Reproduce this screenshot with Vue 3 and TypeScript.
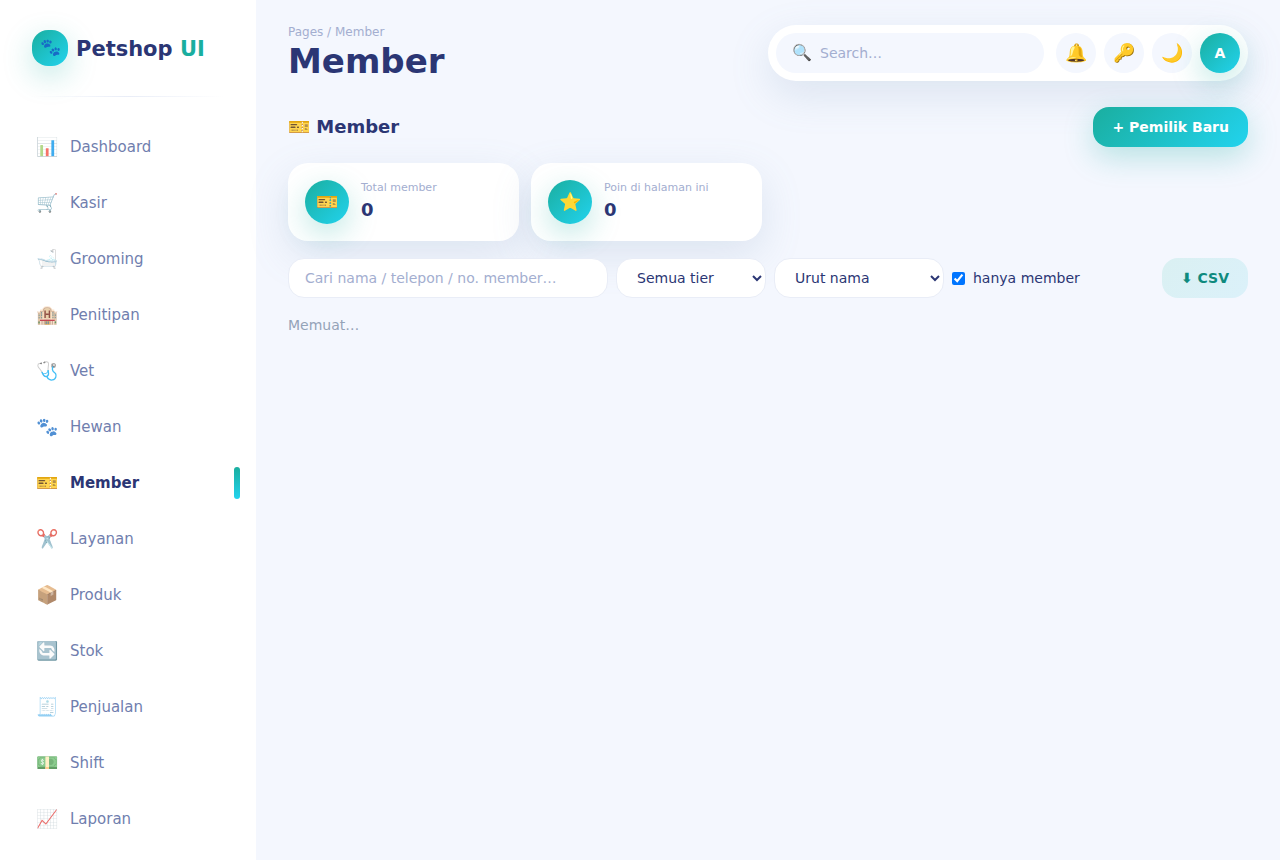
<script setup lang="ts">
import { ref } from 'vue'

interface NavItem {
  icon: string
  label: string
}

interface Stat {
  icon: string
  label: string
  value: number
}

const navItems: NavItem[] = [
  { icon: '📊', label: 'Dashboard' },
  { icon: '🛒', label: 'Kasir' },
  { icon: '🛁', label: 'Grooming' },
  { icon: '🏨', label: 'Penitipan' },
  { icon: '🩺', label: 'Vet' },
  { icon: '🐾', label: 'Hewan' },
  { icon: '🎫', label: 'Member' },
  { icon: '✂️', label: 'Layanan' },
  { icon: '📦', label: 'Produk' },
  { icon: '🔄', label: 'Stok' },
  { icon: '🧾', label: 'Penjualan' },
  { icon: '💵', label: 'Shift' },
  { icon: '📈', label: 'Laporan' },
]

const stats: Stat[] = [
  { icon: '🎫', label: 'Total member', value: 0 },
  { icon: '⭐', label: 'Poin di halaman ini', value: 0 },
]

const active = ref('Member')
const search = ref('')
const query = ref('')
const tier = ref('all')
const sort = ref('name')
const membersOnly = ref(true)
</script>

<template>
  <div class="layout">
    <aside class="sidebar">
      <div class="brand">
        <span class="brand-mark">🐾</span>
        <span class="brand-name">Petshop <span class="accent">UI</span></span>
      </div>
      <div class="divider"></div>
      <nav class="nav">
        <a
          v-for="item in navItems"
          :key="item.label"
          href="#"
          class="nav-item"
          :class="{ active: item.label === active }"
          @click.prevent="active = item.label"
        >
          <span class="nav-icon">{{ item.icon }}</span>
          <span>{{ item.label }}</span>
        </a>
      </nav>
    </aside>

    <main class="main">
      <header class="topbar">
        <div>
          <div class="crumb">Pages / Member</div>
          <h1 class="title">Member</h1>
        </div>
        <div class="tools">
          <label class="search">
            <span class="search-icon">🔍</span>
            <input v-model="search" type="text" placeholder="Search…" aria-label="Search" />
          </label>
          <button class="round" type="button" aria-label="Notifications">🔔</button>
          <button class="round" type="button" aria-label="Password">🔑</button>
          <button class="round" type="button" aria-label="Dark mode">🌙</button>
          <button class="round avatar" type="button">A</button>
        </div>
      </header>

      <section class="heading">
        <h2>🎫 Member</h2>
        <button class="btn primary" type="button">+ Pemilik Baru</button>
      </section>

      <section class="stats">
        <div v-for="stat in stats" :key="stat.label" class="stat">
          <span class="stat-icon">{{ stat.icon }}</span>
          <div>
            <div class="stat-label">{{ stat.label }}</div>
            <div class="stat-value">{{ stat.value }}</div>
          </div>
        </div>
      </section>

      <section class="filters">
        <input
          v-model="query"
          class="field"
          type="text"
          placeholder="Cari nama / telepon / no. member…"
          aria-label="Cari member"
        />
        <select v-model="tier" class="select tier" aria-label="Tier">
          <option value="all">Semua tier</option>
        </select>
        <select v-model="sort" class="select sort" aria-label="Urutan">
          <option value="name">Urut nama</option>
        </select>
        <label class="check">
          <input v-model="membersOnly" type="checkbox" />
          hanya member
        </label>
        <button class="btn soft" type="button">⬇ CSV</button>
      </section>

      <p class="loading">Memuat…</p>
    </main>
  </div>
</template>

<style>
body {
  margin: 0;
  background: #f4f7fe;
}
</style>

<style scoped>
.layout {
  --navy: #2b3674;
  --muted: #a3aed0;
  --brand: linear-gradient(135deg, #1aae9f, #22d3ee);
  --glow: 0 10px 30px rgba(26, 174, 159, 0.28);
  --shadow: 0 14px 40px rgba(112, 144, 176, 0.18);
  display: flex;
  height: 100vh;
  overflow: hidden;
  color: var(--navy);
  font-family: 'DejaVu Sans', sans-serif;
  font-size: 14px;
}

.layout *,
.layout *::after {
  box-sizing: border-box;
}

button,
input,
select {
  font-family: inherit;
  font-size: 14px;
  color: inherit;
}

button {
  cursor: pointer;
  border: 0;
}

.sidebar {
  flex: 0 0 256px;
  background: #fff;
  padding: 30px 16px 0;
}

.brand {
  display: flex;
  align-items: center;
  gap: 8px;
  height: 36px;
  padding: 0 16px;
}

.brand-mark {
  display: grid;
  place-items: center;
  width: 36px;
  height: 36px;
  padding-bottom: 2px;
  border-radius: 16px;
  background: var(--brand);
  box-shadow: var(--glow);
  font-size: 17px;
}

.brand-name {
  padding-top: 2px;
  font-size: 21px;
  font-weight: 700;
}

.accent {
  color: #1aae9f;
}

.divider {
  height: 1px;
  margin: 30px 16px 26px;
  background: linear-gradient(90deg, transparent, #e9edf7, transparent);
}

.nav {
  display: flex;
  flex-direction: column;
  gap: 8px;
}

.nav-item {
  position: relative;
  display: flex;
  align-items: center;
  gap: 12px;
  height: 48px;
  padding: 0 20px;
  color: #707eae;
  font-size: 15px;
  text-decoration: none;
}

.nav-icon {
  width: 22px;
  padding-bottom: 2px;
  font-size: 18px;
  opacity: 0.75;
}

.nav-item.active {
  color: var(--navy);
  font-weight: 700;
}

.nav-item.active .nav-icon {
  opacity: 1;
}

.nav-item.active::after {
  content: '';
  position: absolute;
  right: 0;
  top: 8px;
  width: 6px;
  height: 32px;
  border-radius: 3px;
  background: linear-gradient(180deg, #1aae9f, #22d3ee);
}

.main {
  flex: 1;
  min-width: 0;
  padding: 24px 32px;
}

.topbar {
  display: flex;
  align-items: center;
  justify-content: space-between;
  margin-bottom: 25px;
}

.crumb {
  color: var(--muted);
  font-size: 12px;
  line-height: 16px;
}

.title {
  margin: 0;
  font-size: 34px;
  line-height: 42px;
}

.tools {
  display: flex;
  align-items: center;
  gap: 8px;
  width: 50%;
  padding: 8px;
  border-radius: 30px;
  background: #fff;
  box-shadow: var(--shadow);
}

.search {
  display: flex;
  flex: 1;
  align-items: center;
  gap: 8px;
  min-width: 0;
  height: 40px;
  margin-right: 4px;
  padding: 0 16px;
  border-radius: 20px;
  background: #f4f7fe;
}

.search-icon {
  padding-bottom: 2px;
  font-size: 16px;
}

.search input {
  flex: 1;
  min-width: 0;
  padding: 0;
  border: 0;
  outline: 0;
  background: transparent;
}

input::placeholder {
  color: var(--muted);
  opacity: 1;
}

.round {
  display: grid;
  place-items: center;
  width: 40px;
  height: 40px;
  padding: 0 0 2px;
  border-radius: 50%;
  background: #f4f7fe;
  font-size: 18px;
}

.avatar {
  padding: 0;
  background: var(--brand);
  box-shadow: var(--glow);
  color: #fff;
  font-size: 14px;
  font-weight: 700;
}

.heading {
  display: flex;
  align-items: center;
  justify-content: space-between;
  margin-bottom: 16px;
}

h2 {
  margin: 0;
  padding-bottom: 2px;
  font-size: 18px;
}

.btn {
  height: 40px;
  padding: 0 19px;
  border-radius: 16px;
  font-weight: 700;
}

.primary {
  background: var(--brand);
  box-shadow: var(--glow);
  color: #fff;
}

.soft {
  margin-left: auto;
  background: linear-gradient(135deg, #daf0f2, #dbf1fa);
  color: #0f8a7e;
}

.stats {
  display: grid;
  grid-template-columns: repeat(4, 1fr);
  gap: 12px;
  margin-bottom: 17px;
}

.stat {
  display: flex;
  align-items: center;
  gap: 12px;
  padding: 17px;
  border-radius: 20px;
  background: #fff;
  box-shadow: var(--shadow);
}

.stat-icon {
  display: grid;
  place-items: center;
  width: 44px;
  height: 44px;
  padding-bottom: 2px;
  border-radius: 50%;
  background: var(--brand);
  box-shadow: var(--glow);
  font-size: 18px;
}

.stat-label {
  color: var(--muted);
  font-size: 11px;
  line-height: 16px;
}

.stat-value {
  font-size: 18px;
  font-weight: 700;
  line-height: 28px;
}

.filters {
  display: flex;
  align-items: center;
  gap: 8px;
  margin-bottom: 19px;
}

.field,
.select {
  border: 1px solid #e9edf7;
  border-radius: 16px;
  background: #fff;
}

.field {
  width: 320px;
  height: 40px;
  padding: 0 16px;
}

.select {
  height: 40px;
  padding: 0 0 0 16px;
}

.tier {
  width: 150px;
}

.sort {
  width: 170px;
}

.check {
  display: flex;
  align-items: center;
  gap: 8px;
}

.check input {
  width: 13px;
  height: 13px;
  margin: 0;
}

.loading {
  margin: 0;
  color: #94a3b8;
  line-height: 16px;
}
</style>
